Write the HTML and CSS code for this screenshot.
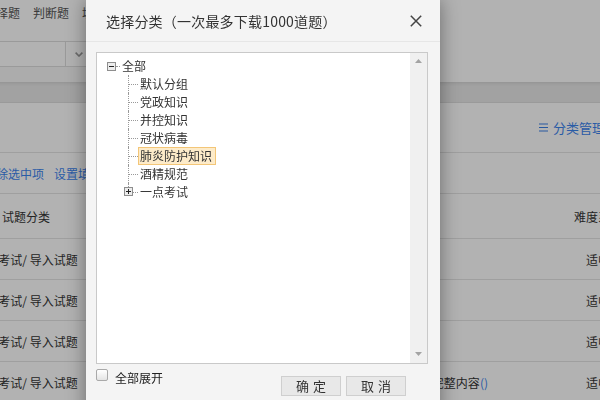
FILE: index.html
```html
<!DOCTYPE html>
<html lang="zh-CN">
<head>
<meta charset="utf-8">
<title>选择分类</title>
<link rel="stylesheet" href="styles.css">
</head>
<body>
<div class="page">
  <div class="nav">
    <span>多选择题</span><span>判断题</span><span>填空题</span><span>问答题</span>
  </div>
  <div class="filter">
    <div class="select">
      <span class="select-arrow"><svg width="8" height="5" viewBox="0 0 8 5"><path d="M0.6 0.6L4 4L7.4 0.6" fill="none" stroke="#9a9a9a" stroke-width="1.6"/></svg></span>
    </div>
    <div class="select-foot"></div>
  </div>
  <div class="band"></div>
  <div class="toolbar">
    <a class="link manage"><svg class="menu-icon" width="9" height="9" viewBox="0 0 9 9"><path d="M0 1h9M0 4.5h9M0 8h9" stroke="#3a80e6" stroke-width="1.2"/></svg>分类管理</a>
  </div>
  <div class="actions">
    <a class="link">删除选中项</a><a class="link">设置填空</a>
  </div>
  <div class="table">
    <div class="tr th"><div class="c1">试题分类</div><div class="c2"></div><div class="c3">难度系数</div></div>
    <div class="tr"><div class="c1">一点考试/ 导入试题</div><div class="c2"></div><div class="c3">适中</div></div>
    <div class="tr"><div class="c1">一点考试/ 导入试题</div><div class="c2"></div><div class="c3">适中</div></div>
    <div class="tr"><div class="c1">一点考试/ 导入试题</div><div class="c2"></div><div class="c3">适中</div></div>
    <div class="tr"><div class="c1">一点考试/ 导入试题</div><div class="c2">查看完整内容<span class="paren">()</span></div><div class="c3">适中</div></div>
  </div>
</div>

<div class="overlay"></div>

<div class="dialog">
  <div class="dlg-head">
    <span class="dlg-title">选择分类（一次最多下载1000道题）</span>
    <svg class="dlg-close" width="12" height="12" viewBox="0 0 12 12"><path d="M0.8 0.8L11.2 11.2M11.2 0.8L0.8 11.2" stroke="#444" stroke-width="1.5"/></svg>
  </div>
  <div class="dlg-body">
    <div class="tree-box">
      <div class="tree">
        <div class="node root">
          <svg class="exp" width="9" height="9" viewBox="0 0 9 9"><rect x="0.5" y="0.5" width="8" height="8" fill="#ececec" stroke="#8e8e8e"/><path d="M2 4.5h5" stroke="#222"/></svg>
          <span class="hdots"></span>
          <span class="label">全部</span>
        </div>
        <div class="node child"><span class="conn"></span><span class="label">默认分组</span></div>
        <div class="node child"><span class="conn"></span><span class="label">党政知识</span></div>
        <div class="node child"><span class="conn"></span><span class="label">并控知识</span></div>
        <div class="node child"><span class="conn"></span><span class="label">冠状病毒</span></div>
        <div class="node child"><span class="conn"></span><span class="label selected">肺炎防护知识</span></div>
        <div class="node child"><span class="conn"></span><span class="label">酒精规范</span></div>
        <div class="node child last">
          <span class="exp-wrap"><span class="vstub"></span><svg class="exp" width="9" height="9" viewBox="0 0 9 9"><rect x="0.5" y="0.5" width="8" height="8" fill="#ececec" stroke="#8e8e8e"/><path d="M2 4.5h5M4.5 2v5" stroke="#222"/></svg></span>
          <span class="hdots"></span>
          <span class="label">一点考试</span>
        </div>
      </div>
      <div class="scroll">
        <svg width="7" height="4" viewBox="0 0 7 4"><path d="M3.5 0L7 4H0z" fill="#a3a3a3"/></svg>
        <svg width="7" height="4" viewBox="0 0 7 4"><path d="M0 0H7L3.5 4z" fill="#a3a3a3"/></svg>
      </div>
    </div>
  </div>
  <div class="dlg-foot">
    <label class="check"><span class="box"></span><span class="check-text">全部展开</span></label>
    <div class="btns">
      <span class="btn">确定</span>
      <span class="btn">取消</span>
    </div>
  </div>
</div>
</body>
</html>
```

FILE: styles.css
```css
html, body {
  margin: 0;
  padding: 0;
  background: #fff;
  overflow: hidden;
  width: 600px;
  height: 400px;
}

body {
  font-family: "Noto Sans CJK SC", "Liberation Sans", sans-serif;
  font-size: 12px;
  color: #333;
  text-spacing-trim: space-all;
}

.page {
  width: 768px;
  margin-left: -120px;
}

.nav {
  height: 41px;
  box-sizing: border-box;
  display: flex;
  gap: 13px;
  padding: 5px 0 0 92px;
  line-height: 16px;
  color: #555;
  white-space: nowrap;
}

.filter {
  height: 41px;
}

.select {
  width: 212px;
  height: 26px;
  box-sizing: border-box;
  border: 1px solid #ddd;
  display: flex;
  justify-content: flex-end;
}

.select-arrow {
  width: 25px;
  border-left: 1px solid #ddd;
  display: flex;
  align-items: center;
  justify-content: center;
}

.select-foot {
  width: 420px;
  height: 15px;
  background: #f7f7f7;
}

.band {
  height: 20px;
  background: #e9e9e9;
  box-shadow: inset 0 4px 4px -3px rgba(0, 0, 0, 0.12);
  border-bottom: 1px solid #ddd;
}

.link {
  color: #3c84ee;
  text-decoration: none;
  white-space: nowrap;
}

.toolbar {
  height: 49px;
  border-bottom: 1px solid #e4e4e4;
  display: flex;
  align-items: center;
  justify-content: flex-end;
  padding-right: 43px;
}

.manage {
  font-size: 13px;
  display: flex;
  align-items: center;
}

.menu-icon {
  margin-right: 5px;
}

.actions {
  height: 40px;
  border-bottom: 1px solid #e4e4e4;
  display: flex;
  align-items: center;
  gap: 10px;
  padding-left: 104px;
}

.tr {
  display: grid;
  grid-template-columns: 292px 376px 100px;
  height: 40px;
  border-bottom: 1px solid #e4e4e4;
  align-items: center;
  white-space: nowrap;
}

.tr.th {
  height: 44px;
}

.c1, .c3 {
  text-align: center;
}

.c2 {
  text-align: right;
  padding-right: 60px;
}

.paren {
  color: #3c84ee;
}

.overlay {
  position: fixed;
  inset: 0;
  background: rgba(0, 0, 0, 0.3);
}

.dialog {
  position: absolute;
  left: 86px;
  top: 0;
  width: 354px;
  height: 420px;
  background: #f4f4f4;
  box-shadow: 0 0 18px rgba(0, 0, 0, 0.4);
  display: flex;
  flex-direction: column;
}

.dlg-head {
  height: 41px;
  border-bottom: 1px solid #e6e6e6;
  display: flex;
  align-items: center;
  justify-content: space-between;
  padding: 0 18px 0 20px;
}

.dlg-title {
  font-size: 14px;
  color: #333;
  white-space: nowrap;
  letter-spacing: 0.2px;
}

.dlg-body {
  padding: 10px 12px 0 10px;
}

.tree-box {
  height: 312px;
  box-sizing: border-box;
  border: 1px solid #c9c9c9;
  background: #fff;
  display: flex;
}

.tree {
  flex: 1;
  padding-top: 4px;
}

.node {
  height: 18px;
  display: flex;
  align-items: center;
  white-space: nowrap;
}

.node.root {
  padding-left: 10px;
}

.node.child {
  padding-left: 31px;
}

.exp {
  display: block;
  flex: none;
}

.hdots {
  width: 4px;
  height: 0;
  border-top: 1px dotted #999;
}

.node.last .hdots {
  width: 5px;
}

.label {
  border: 1px solid transparent;
  padding: 0 3px 0 1px;
  line-height: 16px;
  color: #333;
}

.label.selected {
  background: #fdebc9;
  border-color: #f3c678;
}

.conn {
  align-self: stretch;
  width: 10px;
  box-sizing: border-box;
  border-left: 1px dotted #999;
  display: flex;
  align-items: center;
}

.conn::after {
  content: "";
  flex: 1;
  height: 0;
  border-top: 1px dotted #999;
}

.exp-wrap {
  align-self: flex-start;
  display: flex;
  flex-direction: column;
  margin-left: -4px;
}

.vstub {
  height: 4px;
  margin-left: 4px;
  width: 0;
  border-left: 1px dotted #999;
}

.scroll {
  width: 17px;
  background: #f0f0f0;
  display: flex;
  flex-direction: column;
  align-items: center;
  justify-content: space-between;
  padding: 6px 0 7px;
  box-sizing: border-box;
}

.scroll svg {
  display: block;
}

.dlg-foot {
  display: flex;
  align-items: flex-start;
  padding: 0 34px 0 10px;
}

.check {
  display: flex;
  align-items: flex-start;
  margin-top: 5px;
}

.box {
  width: 12px;
  height: 12px;
  box-sizing: border-box;
  border: 1px solid #a9a9a9;
  border-radius: 2px;
  background: linear-gradient(#fff, #e4e4e4);
}

.check-text {
  margin-left: 7px;
  margin-top: 1px;
  line-height: 16px;
  color: #222;
}

.btns {
  margin-left: auto;
  margin-top: 12px;
  display: flex;
  gap: 5px;
}

.btn {
  width: 60px;
  height: 20px;
  box-sizing: border-box;
  border: 1px solid #cfcfcf;
  background: #e8e8e8;
  font-size: 13px;
  line-height: 18px;
  letter-spacing: 4px;
  text-indent: 4px;
  text-align: center;
  color: #333;
}
```
